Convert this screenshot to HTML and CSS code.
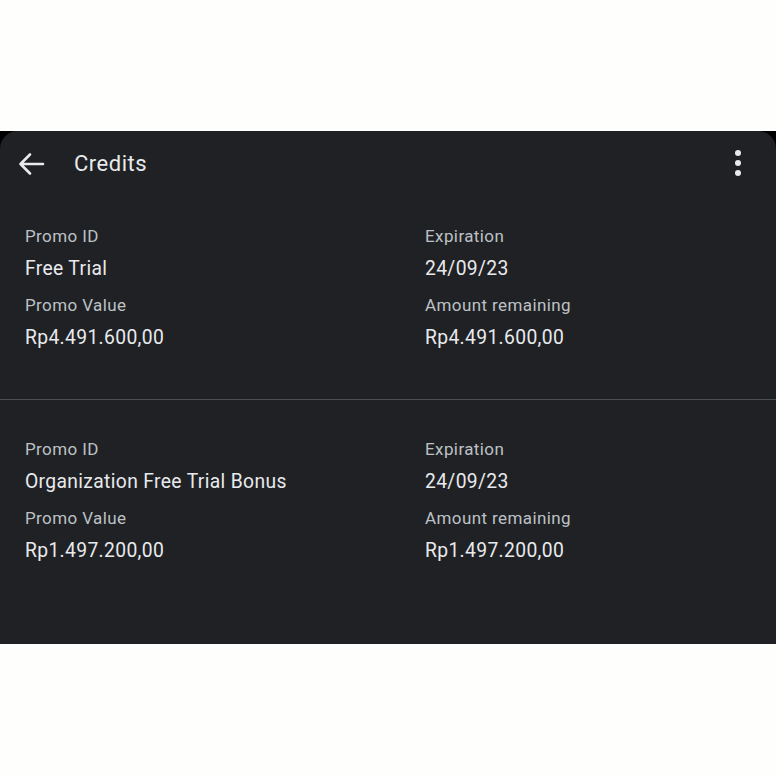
FILE: index.html
```html
<!DOCTYPE html>
<html>
<head>
<meta charset="utf-8">
<link rel="stylesheet" href="styles.css">
</head>
<body>
<div class="page">
  <div class="frame">
    <div class="panel">
      <header class="appbar">
        <svg class="back" width="28" height="24" viewBox="0 0 28 24">
          <path d="M26 12H3.5M13 2.5L3.5 12L13 21.5" fill="none" stroke="#e8eaed" stroke-width="2.6" stroke-linecap="round" stroke-linejoin="round"/>
        </svg>
        <div class="title">Credits</div>
        <svg class="more" width="8" height="28" viewBox="0 0 8 28">
          <circle cx="4" cy="4" r="3" fill="#e8eaed"/>
          <circle cx="4" cy="14" r="3" fill="#e8eaed"/>
          <circle cx="4" cy="24" r="3" fill="#e8eaed"/>
        </svg>
      </header>
      <section class="card first">
        <div class="field"><div class="label">Promo ID</div><div class="value">Free Trial</div></div>
        <div class="field"><div class="label">Expiration</div><div class="value">24/09/23</div></div>
        <div class="field"><div class="label">Promo Value</div><div class="value">Rp4.491.600,00</div></div>
        <div class="field"><div class="label">Amount remaining</div><div class="value">Rp4.491.600,00</div></div>
      </section>
      <div class="divider"></div>
      <section class="card second">
        <div class="field"><div class="label">Promo ID</div><div class="value">Organization Free Trial Bonus</div></div>
        <div class="field"><div class="label">Expiration</div><div class="value">24/09/23</div></div>
        <div class="field"><div class="label">Promo Value</div><div class="value">Rp1.497.200,00</div></div>
        <div class="field"><div class="label">Amount remaining</div><div class="value">Rp1.497.200,00</div></div>
      </section>
    </div>
  </div>
</div>
</body>
</html>
```
FILE: styles.css
```css
html, body {
  margin: 0;
  padding: 0;
  background: #fefefd;
}
body {
  font-family: Roboto, "Noto Sans", Arial, sans-serif;
}
.page {
  padding-top: 131px;
  width: 776px;
}
.frame {
  background: #000;
}
.panel {
  background: #202124;
  border-radius: 18px 18px 0 0;
  height: 513px;
  display: flex;
  flex-direction: column;
}
.appbar {
  height: 64px;
  display: flex;
  align-items: center;
  padding: 0 0 0 17px;
}
.back {
  display: block;
  margin-top: 1px;
}
.title {
  margin-left: 29px;
  color: #e8eaed;
  font-size: 22px;
  letter-spacing: 0.5px;
  flex: 1;
}
.more {
  display: block;
  margin-right: 34px;
}
.card {
  display: grid;
  grid-template-columns: 400px 1fr;
  row-gap: 10px;
  padding-left: 25px;
}
.card.first {
  padding-top: 29px;
  padding-bottom: 47px;
}
.card.second {
  padding-top: 37px;
}
.field {
  display: flex;
  flex-direction: column;
  gap: 7px;
}
.label {
  color: #bdc1c6;
  font-size: 17px;
  line-height: 24px;
  letter-spacing: 0.4px;
}
.value {
  color: #e8eaed;
  font-size: 19.3px;
  line-height: 28px;
  letter-spacing: 0.35px;
}
.divider {
  height: 1px;
  background: #4a4d51;
}
```
